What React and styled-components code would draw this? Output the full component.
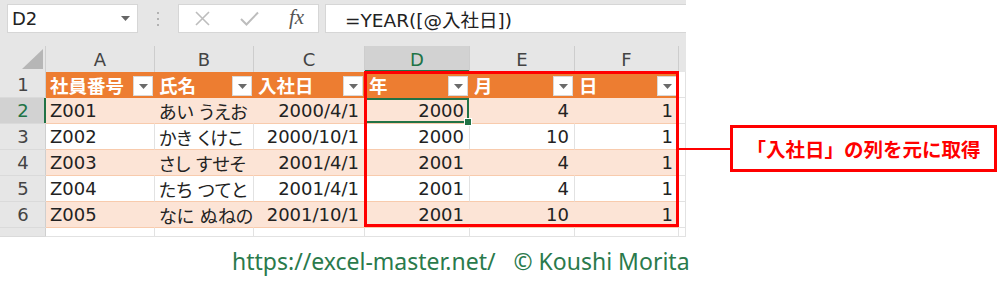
import React from 'react';
import styled, { createGlobalStyle } from 'styled-components';

const GlobalStyle = createGlobalStyle`
  html, body { margin: 0; padding: 0; background: #ffffff; }
  body { width: 1000px; height: 284px; overflow: hidden; }
  * { box-sizing: border-box; }
`;

const Page = styled.div`
  position: relative;
  width: 1000px;
  height: 284px;
  background: #ffffff;
  display: flex;
  flex-direction: column;
  font-family: "DejaVu Sans", "Noto Sans CJK JP", sans-serif;
`;

const Workbook = styled.div`
  width: 686px;
  height: 237px;
  background: #e6e6e6;
  display: flex;
  flex-direction: column;
  overflow: hidden;
`;

const FormulaBar = styled.div`
  height: 46px;
  display: flex;
  align-items: flex-start;
  padding: 4px 0 0 7px;
`;

const NameBox = styled.div`
  width: 131px;
  height: 29px;
  background: #ffffff;
  border: 1px solid #d6d6d6;
  display: flex;
  align-items: center;
  justify-content: space-between;
  padding: 0 7px 0 4px;
  font-size: 18px;
  color: #222;
`;

const Dots = styled.div`
  width: 40px;
  height: 29px;
  display: flex;
  flex-direction: column;
  align-items: center;
  justify-content: center;
  gap: 4px;
  & > span {
    width: 2px;
    height: 2px;
    background: #b2b2b2;
  }
`;

const FxGroup = styled.div`
  width: 141px;
  height: 29px;
  background: #ffffff;
  border: 1px solid #d6d6d6;
  display: grid;
  grid-template-columns: 47px 47px 47px;
  align-items: center;
  justify-items: center;
`;

const FxLabel = styled.span`
  font-family: "Liberation Serif", "DejaVu Serif", serif;
  font-style: italic;
  font-size: 21px;
  color: #555;
  line-height: 1;
  margin-top: -3px;
`;

const FormulaInput = styled.div`
  flex: 1;
  margin-left: 6px;
  height: 29px;
  background: #ffffff;
  border: 1px solid #d6d6d6;
  border-right: none;
  display: flex;
  align-items: center;
  padding-left: 19px;
  font-size: 18.5px;
  color: #222;
  white-space: nowrap;
`;

const SheetWrap = styled.div`
  position: relative;
`;

const Sheet = styled.div`
  display: grid;
  grid-template-columns: 46px 109px 99px 111px 105px 105px 104px 7px;
  grid-template-rows: repeat(7, 26px) 9px;
`;

const Corner = styled.div`
  background: #e6e6e6;
  border-right: 1px solid #cfcfcf;
  display: flex;
  align-items: flex-end;
  justify-content: flex-end;
  padding: 0 2px 3px 0;
`;

const ColHead = styled.div`
  background: ${p => (p.$selected ? '#d2d2d2' : '#e6e6e6')};
  color: ${p => (p.$selected ? '#217346' : '#444')};
  border-right: 1px solid #cdcdcd;
  box-shadow: ${p => (p.$selected ? 'inset 0 -2px 0 #217346' : 'none')};
  display: flex;
  align-items: center;
  justify-content: center;
  font-size: 18px;
`;

const RowHead = styled.div`
  background: ${p => (p.$selected ? '#d2d2d2' : '#e6e6e6')};
  color: ${p => (p.$selected ? '#217346' : '#444')};
  border-bottom: 1px solid #dadada;
  box-shadow: ${p => (p.$selected ? 'inset -2px 0 0 #217346' : 'inset -1px 0 0 #cfcfcf')};
  display: flex;
  align-items: center;
  justify-content: center;
  font-size: 18px;
`;

const HeaderCell = styled.div`
  background: #ed7d31;
  color: #ffffff;
  display: flex;
  align-items: center;
  justify-content: space-between;
  padding: 0 2px 0 4px;
  font-family: "Noto Sans CJK JP", sans-serif;
  font-weight: 700;
  font-size: 18.5px;
  white-space: nowrap;
`;

const FilterButton = styled.div`
  width: 20px;
  height: 20px;
  margin-top: 4px;
  align-self: flex-start;
  background: #ffffff;
  border: 1px solid #d9d9d9;
  display: flex;
  align-items: center;
  justify-content: center;
`;

const DataCell = styled.div`
  position: relative;
  display: flex;
  align-items: center;
  justify-content: ${p => (p.$right ? 'flex-end' : 'flex-start')};
  padding: ${p => (p.$right ? '0 5px 0 0' : '0 0 0 4px')};
  background: ${p => (p.$band ? '#fce4d6' : '#ffffff')};
  border-bottom: 1px solid #f8cbad;
  border-right: 1px solid ${p => (p.$band ? '#fce4d6' : '#e2e2e2')};
  font-size: 18px;
  color: #222;
  white-space: nowrap;
  font-feature-settings: "palt";
  box-shadow: ${p => (p.$active ? 'inset 0 0 0 2px #217346' : 'none')};
  &::after {
    content: '';
    display: ${p => (p.$active ? 'block' : 'none')};
    position: absolute;
    right: -3px;
    bottom: -3px;
    width: 6px;
    height: 6px;
    background: #217346;
    border: 1px solid #ffffff;
    z-index: 1;
  }
`;

const BlankCell = styled.div`
  background: #ffffff;
  border-right: 1px solid #e2e2e2;
  border-bottom: 1px solid #e2e2e2;
`;

const BlankHead = styled.div`
  background: #e6e6e6;
`;

const Highlight = styled.div`
  position: absolute;
  left: 364px;
  top: 25px;
  width: 315px;
  height: 156px;
  border: 3px solid #ff0000;
  pointer-events: none;
  z-index: 3;
`;

const Callout = styled.div`
  position: absolute;
  left: 679px;
  top: 125px;
  display: flex;
  align-items: center;
  z-index: 4;
`;

const Connector = styled.div`
  width: 51px;
  height: 2px;
  background: #ff0000;
`;

const CalloutBox = styled.div`
  width: 267px;
  height: 47px;
  border: 3px solid #ff0000;
  background: #ffffff;
  display: flex;
  align-items: center;
  justify-content: center;
  color: #ff0000;
  font-family: "Noto Sans CJK JP", sans-serif;
  font-weight: 700;
  font-size: 19.5px;
  white-space: nowrap;
`;

const Footer = styled.div`
  padding: 9px 0 0 232px;
  font-family: "Noto Sans", "DejaVu Sans", sans-serif;
  font-size: 23px;
  line-height: 31px;
  color: #2a7a4c;
  white-space: pre;
`;

const Caret = ({ color = '#555' }) => (
  <svg width="9" height="5" viewBox="0 0 9 5">
    <polygon points="0,0 9,0 4.5,5" fill={color} />
  </svg>
);

const CrossIcon = () => (
  <svg width="15" height="15" viewBox="0 0 15 15">
    <path d="M1 1 L14 14 M14 1 L1 14" stroke="#bdbdbd" strokeWidth="1.6" fill="none" />
  </svg>
);

const CheckIcon = () => (
  <svg width="19" height="15" viewBox="0 0 19 15">
    <path d="M1 8 L6.5 13.5 L18 1.5" stroke="#bdbdbd" strokeWidth="2" fill="none" />
  </svg>
);

const CornerTriangle = () => (
  <svg width="21" height="20" viewBox="0 0 21 20">
    <polygon points="21,0 21,20 0,20" fill="#b6b6b6" />
  </svg>
);

const columns = ['A', 'B', 'C', 'D', 'E', 'F'];
const headers = ['社員番号', '氏名', '入社日', '年', '月', '日'];
const rightAligned = [false, false, true, true, true, true];
const rows = [
  ['Z001', 'あい うえお', '2000/4/1', '2000', '4', '1'],
  ['Z002', 'かき くけこ', '2000/10/1', '2000', '10', '1'],
  ['Z003', 'さし すせそ', '2001/4/1', '2001', '4', '1'],
  ['Z004', 'たち つてと', '2001/4/1', '2001', '4', '1'],
  ['Z005', 'なに ぬねの', '2001/10/1', '2001', '10', '1'],
];

export default function App() {
  return (
    <>
      <GlobalStyle />
      <Page>
        <Workbook>
          <FormulaBar>
            <NameBox>
              <span>D2</span>
              <Caret color="#666" />
            </NameBox>
            <Dots>
              <span />
              <span />
              <span />
            </Dots>
            <FxGroup>
              <CrossIcon />
              <CheckIcon />
              <FxLabel>fx</FxLabel>
            </FxGroup>
            <FormulaInput>=YEAR([@入社日])</FormulaInput>
          </FormulaBar>
          <SheetWrap>
            <Sheet>
              <Corner>
                <CornerTriangle />
              </Corner>
              {columns.map(c => (
                <ColHead key={c} $selected={c === 'D'}>
                  {c}
                </ColHead>
              ))}
              <BlankHead />

              <RowHead>1</RowHead>
              {headers.map(h => (
                <HeaderCell key={h}>
                  <span>{h}</span>
                  <FilterButton>
                    <Caret color="#6a6a6a" />
                  </FilterButton>
                </HeaderCell>
              ))}
              <BlankCell />

              {rows.map((r, i) => (
                <React.Fragment key={r[0]}>
                  <RowHead $selected={i === 0}>{i + 2}</RowHead>
                  {r.map((v, j) => (
                    <DataCell
                      key={j}
                      $band={i % 2 === 0}
                      $right={rightAligned[j]}
                      $active={i === 0 && j === 3}
                    >
                      {v}
                    </DataCell>
                  ))}
                  <BlankCell />
                </React.Fragment>
              ))}

              <RowHead />
              {columns.map(c => (
                <BlankCell key={c} />
              ))}
              <BlankCell />
            </Sheet>
            <Highlight />
          </SheetWrap>
        </Workbook>
        <Callout>
          <Connector />
          <CalloutBox>「入社日」の列を元に取得</CalloutBox>
        </Callout>
        <Footer>{'https://excel-master.net/   © Koushi Morita'}</Footer>
      </Page>
    </>
  );
}
